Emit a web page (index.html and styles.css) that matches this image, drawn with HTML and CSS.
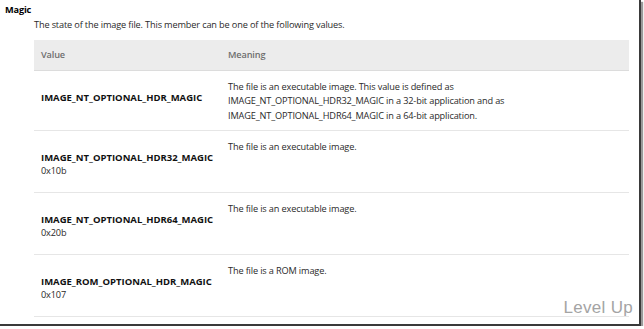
FILE: index.html
```html
<!DOCTYPE html>
<html lang="en">

<head>
    <meta charset="UTF-8">
    <title>Magic</title>
    <link rel="stylesheet" href="styles.css">
</head>

<body>
    <div class="shot-wrap">
        <dl class="member">
            <dt class="member-name">Magic</dt>
            <dd class="member-desc">
                <p class="desc-text">The state of the image file. This member can be one of the following values.</p>
                <table class="value-table">
                    <thead>
                        <tr>
                            <th class="col-value">Value</th>
                            <th>Meaning</th>
                        </tr>
                    </thead>
                    <tbody>
                        <tr>
                            <td class="cell-value"><b class="const-name">IMAGE_NT_OPTIONAL_HDR_MAGIC</b></td>
                            <td class="cell-meaning">
                                <p class="meaning-text">The file is an executable image. This value is defined as IMAGE_NT_OPTIONAL_HDR32_MAGIC in a 32-bit application and as IMAGE_NT_OPTIONAL_HDR64_MAGIC in a 64-bit application.</p>
                            </td>
                        </tr>
                        <tr>
                            <td class="cell-value">
                                <b class="const-name">IMAGE_NT_OPTIONAL_HDR32_MAGIC</b>
                                <span class="const-hex">0x10b</span>
                            </td>
                            <td class="cell-meaning">
                                <p class="meaning-text">The file is an executable image.</p>
                            </td>
                        </tr>
                        <tr>
                            <td class="cell-value">
                                <b class="const-name">IMAGE_NT_OPTIONAL_HDR64_MAGIC</b>
                                <span class="const-hex">0x20b</span>
                            </td>
                            <td class="cell-meaning">
                                <p class="meaning-text">The file is an executable image.</p>
                            </td>
                        </tr>
                        <tr>
                            <td class="cell-value">
                                <b class="const-name">IMAGE_ROM_OPTIONAL_HDR_MAGIC</b>
                                <span class="const-hex">0x107</span>
                            </td>
                            <td class="cell-meaning">
                                <p class="meaning-text">The file is a ROM image.</p>
                            </td>
                        </tr>
                    </tbody>
                </table>
            </dd>
        </dl>
        <span class="watermark">Level Up</span>
    </div>
</body>

</html>
```

FILE: styles.css
```css
html,
body {
    padding: 0;
    margin: 0;
    background: #ffffff;
}

.shot-wrap {
    position: relative;
    box-sizing: border-box;
    width: 641px;
    height: 326px;
    overflow: hidden;

    border-right: 2px solid #3a3a3a;
    border-bottom: 2px solid #3a3a3a;
    box-shadow: 2px 2px 1px #9a9a9a;

    font-family: "Open Sans", "Noto Sans", sans-serif;
    font-size: 9.2px;
    letter-spacing: -0.15px;
    color: #2a2a2a;
}

.member {
    margin: 0;
    padding: 4px 0 0 5px;
}

.member-name {
    font-weight: bold;
    color: #000000;
    line-height: 11px;
}

.member-desc {
    margin: 0 0 0 29px;
}

.desc-text {
    margin: 0;
    padding-top: 3px;
    line-height: 13px;
}

.value-table {
    margin-top: 9px;
    width: 595px;
    border-collapse: collapse;
    table-layout: fixed;
}

.value-table th {
    height: 30px;
    padding: 0 7px;
    box-sizing: border-box;

    background-color: #ececec;
    border-bottom: 1px solid #dcdcdc;

    text-align: left;
    font-weight: 600;
    color: #6e6e6e;
}

.col-value {
    width: 187px;
}

.value-table td {
    vertical-align: top;
    border-bottom: 1px solid #e6e6e6;
}

.cell-value {
    padding: 21px 7px 15px;
}

.const-name {
    display: block;
    line-height: 12px;

    font-size: 9.5px;
    font-weight: 700;
    letter-spacing: 0;
    color: #111111;
}

.const-hex {
    display: block;
    line-height: 13px;
}

.cell-meaning {
    padding: 9px 7px 7px;
}

.meaning-text {
    margin: 0;
    max-width: 302px;
    line-height: 14.5px;
}

.watermark {
    position: absolute;
    right: 6px;
    bottom: 6px;

    font-family: "Liberation Sans", Arial, sans-serif;
    font-size: 17px;
    color: #a4a4a4;
    letter-spacing: 0.3px;
}
```
